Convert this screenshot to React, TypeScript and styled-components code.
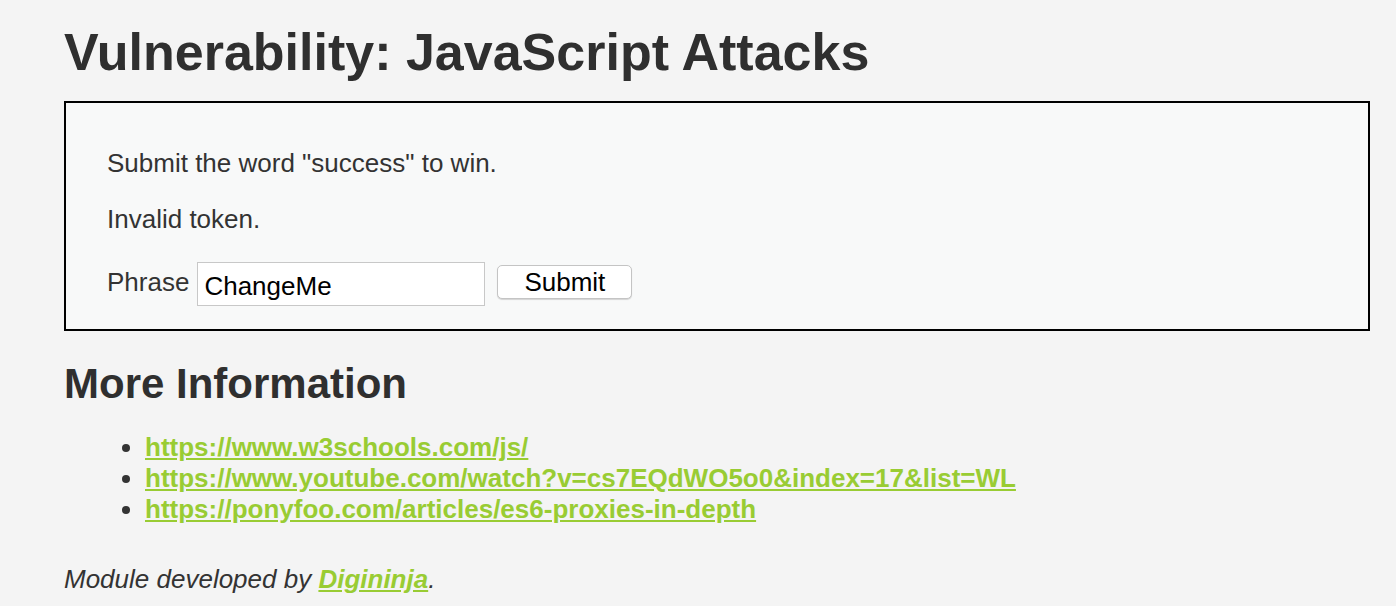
import React from "react";
import styled, { createGlobalStyle } from "styled-components";

const GlobalStyle = createGlobalStyle`
  html, body {
    margin: 0;
    padding: 0;
    background: #f4f4f4;
  }
  body {
    font-family: "Liberation Sans", Arial, sans-serif;
    color: #333333;
  }
`;

const Page = styled.div`
  padding: 22px 26px 0 64px;
`;

const Title = styled.h1`
  margin: 0 0 19px 0;
  font-size: 52px;
  font-weight: bold;
  line-height: 60px;
  color: #2f2f2f;
`;

const Box = styled.div`
  border: 2px solid #000000;
  background: #f8f9f9;
  padding: 44px 41px 23px 41px;
`;

const Text = styled.p`
  margin: 0 0 24px 0;
  font-size: 26px;
  line-height: 32px;
`;

const Form = styled.form`
  display: flex;
  align-items: flex-start;
  margin-top: 27px;
  font-size: 26px;
  line-height: 32px;
`;

const Label = styled.label`
  margin: 4px 8px 0 0;
`;

const Input = styled.input`
  width: 288px;
  height: 44px;
  box-sizing: border-box;
  border: 1px solid #c8c8c8;
  background: #ffffff;
  padding: 5px 6px 0 6px;
  font-family: "Liberation Sans", Arial, sans-serif;
  font-size: 26px;
  color: #000000;
`;

const Button = styled.button`
  width: 135px;
  height: 34px;
  margin: 3px 0 0 12px;
  padding: 0;
  border: 1px solid #c4c4c4;
  border-radius: 5px;
  background: #ffffff;
  box-shadow: 0 1px 1px rgba(0, 0, 0, 0.15);
  font-family: "Liberation Sans", Arial, sans-serif;
  font-size: 26px;
  line-height: 32px;
  color: #000000;
`;

const SubTitle = styled.h2`
  margin: 29px 0 24px 0;
  font-size: 42px;
  line-height: 48px;
  font-weight: bold;
  color: #2f2f2f;
`;

const List = styled.ul`
  margin: 0;
  padding-left: 81px;
  font-size: 26px;
  line-height: 31px;
`;

const Link = styled.a`
  color: #99cc33;
  font-weight: bold;
  text-decoration: underline;
`;

const Credit = styled.p`
  margin: 38px 0 0 0;
  font-size: 26px;
  line-height: 32px;
  font-style: italic;
`;

const links = [
  "https://www.w3schools.com/js/",
  "https://www.youtube.com/watch?v=cs7EQdWO5o0&index=17&list=WL",
  "https://ponyfoo.com/articles/es6-proxies-in-depth",
];

const App = (): JSX.Element => {
  return (
    <Page>
      <GlobalStyle />
      <Title>Vulnerability: JavaScript Attacks</Title>
      <Box>
        <Text>Submit the word "success" to win.</Text>
        <Text>Invalid token.</Text>
        <Form onSubmit={(e) => e.preventDefault()}>
          <Label>Phrase</Label>
          <Input type="text" defaultValue="ChangeMe" />
          <Button type="submit">Submit</Button>
        </Form>
      </Box>
      <SubTitle>More Information</SubTitle>
      <List>
        {links.map((l) => (
          <li key={l}>
            <Link href={l}>{l}</Link>
          </li>
        ))}
      </List>
      <Credit>
        Module developed by <Link href="#">Digininja</Link>.
      </Credit>
    </Page>
  );
};

export default App;
